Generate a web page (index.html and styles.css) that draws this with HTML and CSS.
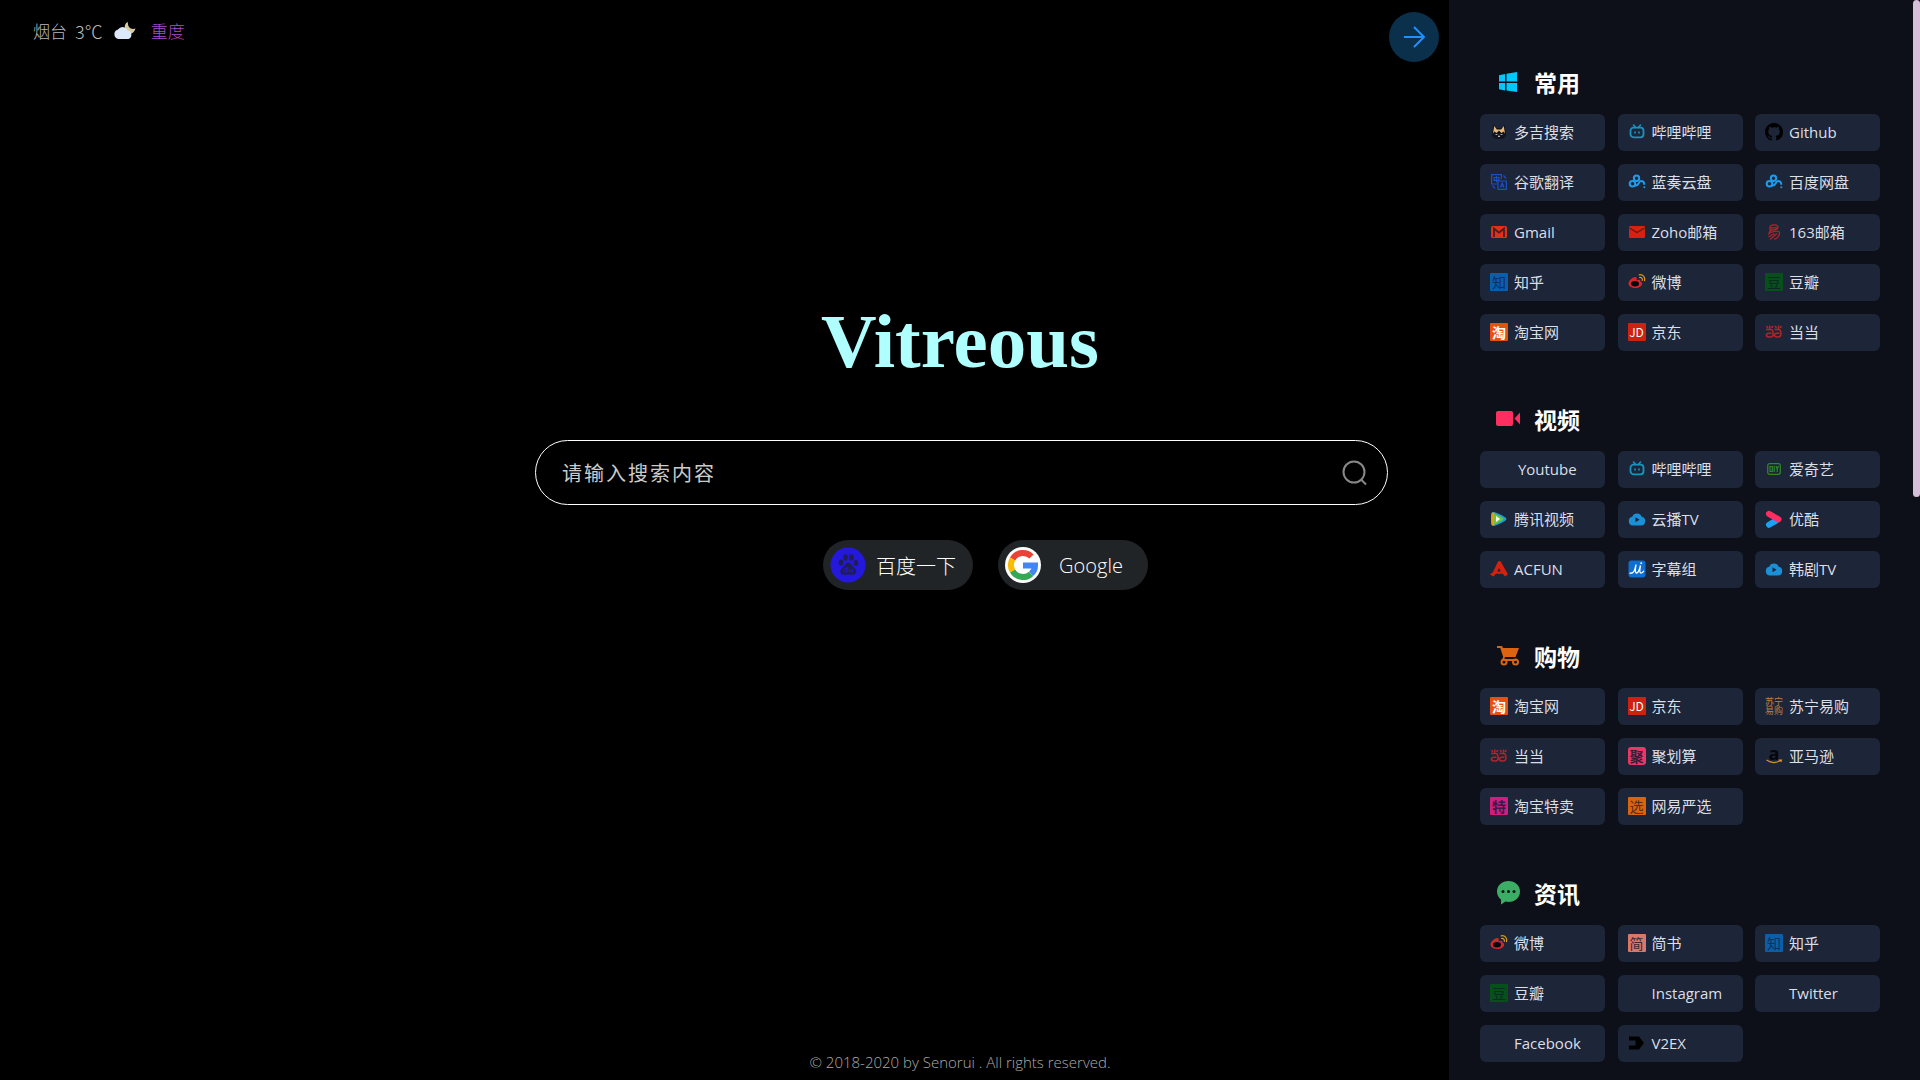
FILE: index.html
```html
<!DOCTYPE html>
<html lang="zh-CN">
<head>
<meta charset="utf-8">
<title>Vitreous</title>
<meta name="viewport" content="width=device-width, initial-scale=1">
<link rel="stylesheet" href="styles.css">
</head>
<body>
<svg class="sprite" aria-hidden="true">
  <symbol id="i-doge" viewBox="0 0 18 18">
    <path d="M2 10 3.500 1.500 6.500 5h5l3-3.500L16 10c.5 3-2 6-4.500 6h-5C4 16 1.500 13 2 10z" fill="#11141c"/>
    <path d="M3 10.500 4.300 3l2.500 3.600h4.400L13.700 3 15 10.500l-1.500-2-2 1.500L9 7.500 6.500 10l-2-1.500z" fill="#e8b878"/>
    <path d="M5.500 11.500h2M10.500 11.500h2M8.300 13h1.400L9 14z" stroke="#d8d0c0" fill="#d8d0c0" stroke-width=".8"/>
  </symbol>
  <symbol id="i-bili" viewBox="0 0 18 18">
    <path d="m5.500 2 2 2.500M12.500 2l-2 2.500M7 9v1M11 9v1" fill="none" stroke="#1794c0" stroke-width="1.600" stroke-linecap="round"/>
    <rect x="2.500" y="4.700" width="13" height="9.600" rx="3" fill="none" stroke="#1794c0" stroke-width="1.800"/>
  </symbol>
  <symbol id="i-github" viewBox="0 0 16 16">
    <path d="M8 0C3.580 0 0 3.580 0 8c0 3.540 2.290 6.530 5.470 7.590.4.070.55-.17.55-.38v-1.490c-2.010.37-2.530-.49-2.690-.94-.09-.23-.48-.94-.82-1.130-.28-.15-.68-.52-.01-.53.63-.01 1.080.58 1.230.82.72 1.210 1.870.87 2.330.66.070-.52.28-.87.51-1.070-1.780-.2-3.640-.89-3.640-3.950 0-.87.31-1.590.82-2.150-.08-.2-.36-1.020.08-2.120 0 0 .67-.21 2.200.82A7.600 7.600 0 0 1 8 3.860c.68 0 1.360.09 2 .27 1.530-1.040 2.200-.82 2.200-.82.44 1.100.16 1.920.08 2.120.51.56.82 1.270.82 2.150 0 3.070-1.870 3.750-3.650 3.950.29.25.54.73.54 1.480v2.200c0 .21.15.46.55.38A8 8 0 0 0 16 8c0-4.420-3.580-8-8-8z" fill="#000"/>
  </symbol>
  <symbol id="i-translate" viewBox="0 0 18 18">
    <g fill="none" stroke="#1d4fc0" stroke-width="1.200">
      <path d="M7 11H1.600V1.600h9.800V6M8 8h8.400v8.400H8zM4 4.500h5v2.800H4zM6.500 3v6.300M10.500 14.500l1.700-4.500 1.800 4.500M11 13h2.400M13.500 2.500l2.500 3M2.500 12.500l2.500 3"/>
    </g>
  </symbol>
  <symbol id="i-pan" viewBox="0 0 18 18">
    <g fill="none" stroke="#1f9bea" stroke-width="2">
      <circle cx="4.500" cy="10.800" r="2.800"/><circle cx="8.500" cy="5.200" r="2.700"/>
      <path d="M7 12.500c4.500 1 3-4.500 6-4.500 2 0 3.300 1.300 3.300 3.800"/>
    </g>
    <circle cx="16.300" cy="14.200" r="1" fill="#1f9bea"/>
  </symbol>
  <symbol id="i-gmail" viewBox="0 0 18 18">
    <rect x="1" y="3" width="16" height="12" rx="1.500" fill="#e03015"/>
    <path d="M4 14V5.500l5 4.200 5-4.200V14" fill="none" stroke="#431c2a" stroke-width="1.700"/>
  </symbol>
  <symbol id="i-mail" viewBox="0 0 18 18">
    <rect x="1" y="3" width="16" height="12" rx="1" fill="#d7220f"/>
    <path d="m1.500 5 7.500 4.500L16.500 5" fill="none" stroke="#5a1a24" stroke-width="1.200"/>
  </symbol>
  <symbol id="i-163" viewBox="0 0 18 18">
    <path d="M5 7V4.500c0-3.500 8-3.500 8-.5S9 7 5 7zM5 4.800h7.500M3 11.500C5.500 8.500 14 7 14.500 9.500S12 16.500 9 16M3.500 14l6-3.500M5 16.500l7-6M6 7.500 4 10" fill="none" stroke="#b3222a" stroke-width="1.300"/>
  </symbol>
  <symbol id="i-weibo" viewBox="0 0 18 18">
    <path d="M7.500 4C5 3.800.5 7.500.5 10.500S4 15 7.500 15s6.700-2 6.700-4.300c0-1.600-1.200-2-2-2.200.4-1.300.3-2.600-3.600-1.300.4-1.500.2-3-1.100-3.200z" fill="#d4262c"/>
    <ellipse cx="7" cy="10.800" rx="4" ry="2.700" fill="#07070d"/>
    <path d="M11.500 4.500c2-.4 3.300 1 2.800 2.900M11.300 1.800c3.600-.6 6.100 2.300 5.300 5.900" fill="none" stroke="#d99b26" stroke-width="1.200" stroke-linecap="round"/>
  </symbol>
  <symbol id="i-dangdang" viewBox="0 0 18 18">
    <path d="M1 6.500h4.500c3.500 0 3.500 7.500 0 7.500H4c-3.500 0-3.500-3.800 0-3.800h2.500M9.500 6.500H13c4 0 4 7.500 0 7.500h-1c-3.500 0-3.500-3.800 0-3.800h2.500M1.500 3 3 5M4.800 2.500V6M8 3 6.500 5M10 3l1.500 2M13.500 2.500V6M16.500 3 15 5" fill="none" stroke="#b3242a" stroke-width="1.500"/>
  </symbol>
  <symbol id="i-iqiyi" viewBox="0 0 18 18">
    <rect x="2.700" y="3.700" width="12.600" height="10.600" rx="2" fill="none" stroke="#2a8a25" stroke-width="1.200"/>
    <path d="M5 6.500h2.300v5H5zM9.200 6v6M11 6l1.200 3L13.500 6M12.200 9v3" fill="none" stroke="#2a8a25" stroke-width="1.200"/>
  </symbol>
  <symbol id="i-tencent" viewBox="0 0 18 18">
    <path d="M1.500 3.500C2 1.500 4 2 5.500 2.500c3 1 8 3.500 10 5 1.200 1 1.200 2 0 3-2 1.500-7 4-10 5-1.500.5-3.500 1-4-1-.6-3-.6-8 0-11z" fill="#1c9fe0"/>
    <path d="M1.500 3.500c.7-1.500 2-1 3-.7v12.400c-1 .3-2.300.8-3-.7-.6-3-.6-8 0-11z" fill="#e09a1c"/>
    <path d="M4 3.700c3 .6 6.500 2.500 8.700 4.300.8.700.8 1.300 0 2-2.200 1.800-5.700 3.700-8.700 4.300z" fill="#72c631"/>
    <path d="m6 6 4 3-4 3z" fill="#fff"/>
  </symbol>
  <symbol id="i-cloud" viewBox="0 0 18 18">
    <path d="M5 15.500a4.400 4.400 0 0 1-.7-8.700 5 5 0 0 1 9.400 0 4.400 4.400 0 0 1-.7 8.700z" fill="#1a90d6"/>
    <path d="m7.500 7.200 4 2.500-4 2.500z" fill="#1d2538"/>
  </symbol>
  <symbol id="i-youku" viewBox="0 0 18 18">
    <path d="m4 14.800 7-4.200" stroke="#1aa3f5" stroke-width="6" stroke-linecap="round"/>
    <path d="m4 3.800 9.500 5.500" stroke="#ff2d62" stroke-width="6" stroke-linecap="round"/>
  </symbol>
  <symbol id="i-acfun" viewBox="0 0 18 18">
    <path d="M8 1.500 10.500 1 18 14.500l-3 2-2.200-2.800H6L3.500 16.500 0 14.500 3 12zM9 8l-1.800 3.500h3.600z" fill="#d3230f" fill-rule="evenodd"/>
  </symbol>
  <symbol id="i-zimu" viewBox="0 0 18 18">
    <rect x=".5" y=".5" width="17" height="17" rx="3" fill="#0f6fd0"/>
    <path d="M2 13.200c3 .3 4.500-1 6-8.700-.8 5-1 8 .2 8.500 1.800.3 3.500-4 4.300-7.500-.8 4-1 7 .2 7.500 1 .2 2-.5 3-1.800" fill="none" stroke="#fff" stroke-width="1.300" stroke-linecap="round"/>
    <circle cx="13.200" cy="3.200" r=".9" fill="#fff"/>
  </symbol>
  <symbol id="i-v2ex" viewBox="0 0 18 18">
    <path d="M1 2.500h10L16 9l-5 6.500H1V11.500h6.500v-5H1z" fill="#000"/>
  </symbol>
</svg>

<main class="page">
  <header class="weather">
    <span>烟台</span>
    <span class="weather-temp">3℃</span>
    <svg class="weather-icon" viewBox="0 0 24 20" role="img" aria-label="多云">
      <path d="M15 1c-3 1-4.500 5-2 9.500s8 2.500 9.500-3c-2.500 1-5 .500-6.500-1.500-1-1.500-1.300-3.300-1-5z" fill="#d9cba0"/>
      <path d="M5.500 18A4.800 4.800 0 0 1 5 8.600a5.500 5.500 0 0 1 9.600.6A4.600 4.600 0 0 1 15.500 18z" fill="#dbe9fb"/>
    </svg>
    <span class="weather-air">重度</span>
  </header>

  <section class="hero">
    <h1 class="logo">Vitreous</h1>
    <form class="search">
      <input class="search-input" type="text" placeholder="请输入搜索内容" aria-label="请输入搜索内容">
      <button class="search-button" type="button" aria-label="搜索">
        <svg viewBox="0 0 26 26"><circle cx="12" cy="12" r="10.500"/><path d="m19 19.500 5 5"/></svg>
      </button>
    </form>
    <div class="engines">
      <button class="engine" type="button">
        <svg class="engine-icon" viewBox="0 0 36 36">
          <circle cx="18" cy="18" r="17.500" fill="#2418dc"/>
          <g fill="#201c54">
            <ellipse cx="11" cy="15.500" rx="2.300" ry="3"/><ellipse cx="15.500" cy="10.500" rx="2.300" ry="3.200"/>
            <ellipse cx="21.500" cy="10.500" rx="2.300" ry="3.200"/><ellipse cx="26" cy="16" rx="2.300" ry="3"/>
            <path d="M18.300 15.500c2.700 0 3.500 3 5.200 4.500 2.300 2 3.300 3.300 2.600 5.500-1 3.200-4.700 1.900-7.800 1.900s-6.700 1.300-7.800-1.900c-.7-2.200.4-3.500 2.700-5.500 1.700-1.500 2.400-4.500 5.100-4.500z"/>
          </g>
          <path d="M17 20v5h-2c-2 0-2-3 0-3h2M19.500 22v2c0 1.300 2.800 1.300 2.800 0v-2V25" fill="none" stroke="#2418dc"/>
        </svg>
        <span class="engine-name">百度一下</span>
      </button>
      <button class="engine" type="button">
        <svg class="engine-icon" viewBox="0 0 36 36">
          <circle cx="18" cy="18" r="18" fill="#fff"/>
          <g fill="none" stroke-width="6">
            <path d="M7.600 12A12 12 0 0 1 26.500 9.500" stroke="#ea4335"/>
            <path d="M7.600 24a12 12 0 0 1 0-12" stroke="#fbbc05"/>
            <path d="M26 26.900A12 12 0 0 1 7.600 24" stroke="#34a853"/>
            <path d="M18 18.500h12c0 3.500-1.500 6.400-4 8.400" stroke="#4285f4"/>
          </g>
        </svg>
        <span class="engine-name">Google</span>
      </button>
    </div>
  </section>

  <footer class="copyright">© 2018-2020 by Senorui . All rights reserved.</footer>
</main>

<button class="toggle" type="button" aria-label="收起导航">
  <svg viewBox="0 0 24 24"><path d="M2 12h20M12 2l10 10-10 10"/></svg>
</button>

<aside class="drawer">
  <section class="group">
    <h2 class="group-title">
      <svg viewBox="0 0 24 24" fill="#00c8fa"><path d="M3 5.200 9 4v7.500H3zM10.500 3.700 21 2v9.500H10.500zM3 13h6v7.500l-6-1.200zM10.500 13H21v9l-10.500-1.500z"/></svg>
      常用
    </h2>
    <nav class="links">
      <a class="link" href="#"><svg><use href="#i-doge"/></svg>多吉搜索</a>
      <a class="link" href="#"><svg><use href="#i-bili"/></svg>哔哩哔哩</a>
      <a class="link" href="#"><svg><use href="#i-github"/></svg>Github</a>
      <a class="link" href="#"><svg><use href="#i-translate"/></svg>谷歌翻译</a>
      <a class="link" href="#"><svg><use href="#i-pan"/></svg>蓝奏云盘</a>
      <a class="link" href="#"><svg><use href="#i-pan"/></svg>百度网盘</a>
      <a class="link" href="#"><svg><use href="#i-gmail"/></svg>Gmail</a>
      <a class="link" href="#"><svg><use href="#i-mail"/></svg>Zoho邮箱</a>
      <a class="link" href="#"><svg><use href="#i-163"/></svg>163邮箱</a>
      <a class="link" href="#"><span class="badge zhihu">知</span>知乎</a>
      <a class="link" href="#"><svg><use href="#i-weibo"/></svg>微博</a>
      <a class="link" href="#"><span class="badge douban">豆</span>豆瓣</a>
      <a class="link" href="#"><span class="badge taobao">淘</span>淘宝网</a>
      <a class="link" href="#"><span class="badge jd">JD</span>京东</a>
      <a class="link" href="#"><svg><use href="#i-dangdang"/></svg>当当</a>
    </nav>
  </section>

  <section class="group">
    <h2 class="group-title">
      <svg viewBox="0 0 24 24" fill="#fe2f60"><rect y="4" width="17" height="15" rx="2"/><path d="m18.500 11.500 5.500-6v12z"/></svg>
      视频
    </h2>
    <nav class="links">
      <a class="link" href="#"><span class="badge"></span>&nbsp;Youtube</a>
      <a class="link" href="#"><svg><use href="#i-bili"/></svg>哔哩哔哩</a>
      <a class="link" href="#"><svg><use href="#i-iqiyi"/></svg>爱奇艺</a>
      <a class="link" href="#"><svg><use href="#i-tencent"/></svg>腾讯视频</a>
      <a class="link" href="#"><svg><use href="#i-cloud"/></svg>云播TV</a>
      <a class="link" href="#"><svg><use href="#i-youku"/></svg>优酷</a>
      <a class="link" href="#"><svg><use href="#i-acfun"/></svg>ACFUN</a>
      <a class="link" href="#"><svg><use href="#i-zimu"/></svg>字幕组</a>
      <a class="link" href="#"><svg><use href="#i-cloud"/></svg>韩剧TV</a>
    </nav>
  </section>

  <section class="group">
    <h2 class="group-title">
      <svg viewBox="0 0 24 24"><path d="M1 2h5l1 2h16l-3.500 9H9l-1 2h12v2H5.500l1.700-4L4.300 4H1z" fill="#dc6410"/><g fill="none" stroke="#dc6410" stroke-width="2"><circle cx="8" cy="18" r="2.500"/><circle cx="19.500" cy="18" r="2.500"/></g></svg>
      购物
    </h2>
    <nav class="links">
      <a class="link" href="#"><span class="badge taobao">淘</span>淘宝网</a>
      <a class="link" href="#"><span class="badge jd">JD</span>京东</a>
      <a class="link" href="#"><span class="badge suning">苏宁易购</span>苏宁易购</a>
      <a class="link" href="#"><svg><use href="#i-dangdang"/></svg>当当</a>
      <a class="link" href="#"><span class="badge juhuasuan">聚</span>聚划算</a>
      <a class="link" href="#"><span class="badge amazon">a<svg viewBox="0 0 18 5"><path d="M1.500 1c4.500 3 10 3 14 .500M13.500 1h3l-.7 2" fill="none" stroke="#d9932a" stroke-width="1.200"/></svg></span>亚马逊</a>
      <a class="link" href="#"><span class="badge temai">特</span>淘宝特卖</a>
      <a class="link" href="#"><span class="badge yanxuan">选</span>网易严选</a>
    </nav>
  </section>

  <section class="group">
    <h2 class="group-title">
      <svg viewBox="0 0 24 24"><path d="M12.500 0C19 0 24 4.500 24 10.500S19 21 12.500 21c-1 0-2-.1-3-.4L5 23.500v-5C2.500 16.600 1 14 1 10.500 1 4.500 6 0 12.500 0z" fill="#3cad64"/><g fill="#0d1018"><circle cx="7" cy="10.500" r="1.500"/><circle cx="12.500" cy="10.500" r="1.500"/><circle cx="18" cy="10.500" r="1.500"/></g></svg>
      资讯
    </h2>
    <nav class="links">
      <a class="link" href="#"><svg><use href="#i-weibo"/></svg>微博</a>
      <a class="link" href="#"><span class="badge jianshu">简</span>简书</a>
      <a class="link" href="#"><span class="badge zhihu">知</span>知乎</a>
      <a class="link" href="#"><span class="badge douban">豆</span>豆瓣</a>
      <a class="link" href="#"><span class="badge"></span>Instagram</a>
      <a class="link" href="#"><span class="badge"></span>Twitter</a>
      <a class="link" href="#"><span class="badge"></span>Facebook</a>
      <a class="link" href="#"><svg><use href="#i-v2ex"/></svg>V2EX</a>
    </nav>
  </section>
</aside>
<div class="scroll-thumb"></div>
</body>
</html>
```
FILE: styles.css
```css
* {
  box-sizing: border-box;
}

body {
  margin: 0;
  background: #000;
  color: #fff;
  font-family: "Open Sans", "Noto Sans CJK SC", sans-serif;
}

button {
  border: 0;
  padding: 0;
  font-family: inherit;
  cursor: pointer;
}

.sprite {
  display: none;
}

.page {
  display: flex;
  flex-direction: column;
  min-height: 100vh;
}

.weather {
  display: flex;
  align-items: center;
  height: 62px;
  padding-left: 33px;
  color: #bbb;
  font: 300 17px/24px "Noto Sans CJK SC", sans-serif;
}

.weather-temp {
  margin-left: 8px;
  font-size: 18px;
}

.weather-icon {
  width: 24px;
  height: 20px;
  margin: 0 14px 0 10px;
}

.weather-air {
  color: #a54fcb;
}

.hero {
  display: flex;
  flex: 1;
  flex-direction: column;
  align-items: center;
  padding-top: 234px;
}

.logo {
  margin: 0 0 54px;
  color: #afffff;
  font: bold 77px/90px "Liberation Serif", serif;
}

.search {
  display: flex;
  align-items: center;
  width: 853px;
  max-width: 90%;
  height: 65px;
  margin-left: 3px;
  padding: 0 19px 0 26px;
  border: 1px solid #fff;
  border-radius: 33px;
}

.search-input {
  flex: 1;
  min-width: 0;
  height: 40px;
  padding: 0;
  border: 0;
  outline: 0;
  background: none;
  color: #fff;
  font: 20px "Noto Sans CJK SC", sans-serif;
  letter-spacing: 2px;
}

.search-input::placeholder {
  color: #ccc;
}

.search-button {
  width: 26px;
  height: 26px;
  background: none;
}

.search-button svg {
  display: block;
  fill: none;
  stroke: #888;
  stroke-width: 2;
}

.engines {
  display: flex;
  gap: 25px;
  margin-top: 35px;
  padding-left: 51px;
}

.engine {
  display: flex;
  align-items: center;
  width: 150px;
  height: 50px;
  padding: 0 7px;
  border-radius: 25px;
  background: #212426;
  color: #fff;
  font-size: 20px;
  font-weight: 300;
}

.engine-icon {
  width: 36px;
  height: 36px;
}

.engine-name {
  flex: 1;
  text-align: center;
}

.copyright {
  padding-bottom: 8px;
  color: #aaa;
  font-size: 15px;
  font-weight: 300;
  line-height: 20px;
  text-align: center;
}

.toggle {
  position: fixed;
  top: 12px;
  right: 481px;
  display: grid;
  place-items: center;
  width: 50px;
  height: 50px;
  border-radius: 50%;
  background: #0a304c;
}

.toggle svg {
  width: 24px;
  fill: none;
  stroke: #1e90ff;
  stroke-width: 2;
}

.drawer {
  position: fixed;
  top: 0;
  right: 0;
  bottom: 0;
  width: 471px;
  padding: 63px 40px 0 31px;
  overflow: hidden;
  background: #0d1018;
}

.scroll-thumb {
  position: fixed;
  top: 0;
  right: 0;
  width: 7px;
  height: 46%;
  border-radius: 4px;
  background: #d8bfd8;
}

.group {
  margin-bottom: 49px;
}

.group-title {
  display: flex;
  align-items: center;
  gap: 14px;
  height: 38px;
  margin: 0 0 13px;
  padding-left: 16px;
  font: bold 23px/38px "Noto Sans CJK SC", sans-serif;
}

.group-title svg {
  width: 24px;
  height: 24px;
}

.links {
  display: grid;
  grid-template-columns: repeat(3, 125px);
  justify-content: space-between;
  row-gap: 13px;
}

.link {
  display: flex;
  align-items: center;
  height: 37px;
  padding: 0 0 2px 10px;
  border-radius: 6px;
  background: #1d2538;
  color: #dcdfe6;
  font-size: 15px;
  text-decoration: none;
  white-space: nowrap;
}

.link > svg,
.badge {
  flex: none;
  width: 18px;
  height: 18px;
  margin-right: 6px;
}

.badge {
  border-radius: 1px;
  font: 14px/18px "Noto Sans CJK SC", sans-serif;
  text-align: center;
}

.zhihu {
  background: #0a5fab;
  color: #122e5c;
}

.douban {
  background: #07501c;
  color: #0b2a24;
}

.taobao {
  background: #e8500e;
  color: #fff;
  font-weight: bold;
}

.jd {
  background: #d0200f;
  color: #fff;
  font-size: 12px;
}

.suning {
  color: #c07f40;
  font-size: 9px;
  line-height: 9px;
  white-space: normal;
}

.juhuasuan {
  border-radius: 3px;
  background: #e83868;
  color: #3a1c38;
  font-weight: bold;
}

.amazon {
  color: #05060a;
  font: bold 18px/12px "Open Sans", sans-serif;
}

.amazon svg {
  display: block;
  width: 18px;
  height: 5px;
}

.temai {
  background: #cc1f80;
  color: #3a1a4a;
  font-weight: bold;
}

.yanxuan {
  background: #d8640f;
  color: #5a2c1c;
}

.jianshu {
  background: #d97868;
  color: #42242e;
}
```
